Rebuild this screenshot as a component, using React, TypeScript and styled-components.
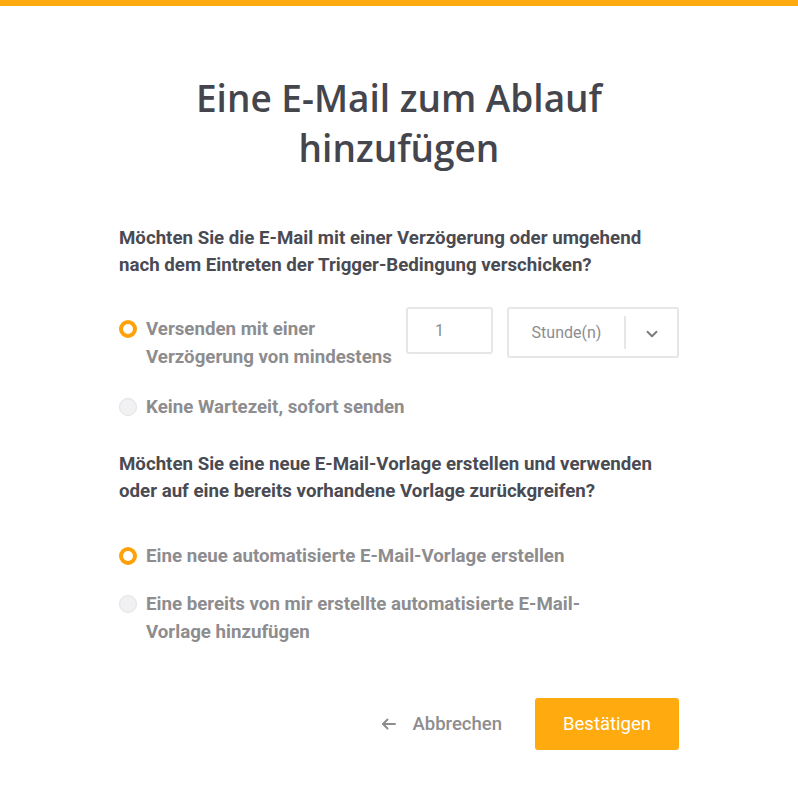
import React, { useState } from 'react';
import styled, { createGlobalStyle } from 'styled-components';

const GlobalStyle = createGlobalStyle`
    html, body {
        margin: 0;
        padding: 0;
        background: #ffffff;
    }
    * {
        box-sizing: border-box;
    }
`;

const TopBar = styled.div`
    height: 6px;
    background: #ffab10;
`;

const Whole = styled.section`
    width: 560px;
    margin: 0 auto;
    padding-top: 67px;
    font-family: Roboto, "Liberation Sans", sans-serif;
`;

const Title = styled.h1`
    margin: 0 0 52px;
    text-align: center;
    font-family: "Open Sans", "Liberation Sans", sans-serif;
    font-weight: 600;
    font-size: 37px;
    line-height: 50px;
    color: #45454d;
    padding: 0 60px;
`;

const Question = styled.p`
    margin: 0;
    font-size: 18.7px;
    font-weight: 700;
    line-height: 27px;
    color: #4a4a52;
`;

const Options = styled.div<{ $top: number; $gap: number }>`
    display: flex;
    flex-direction: column;
    gap: ${(p) => p.$gap}px;
    margin-top: ${(p) => p.$top}px;
`;

const OptionRow = styled.div`
    display: flex;
    align-items: flex-start;
    gap: 12px;
`;

const Label = styled.label<{ $width?: number }>`
    display: flex;
    align-items: flex-start;
    gap: 9px;
    width: ${(p) => (p.$width ? `${p.$width}px` : 'auto')};
    font-size: 18.7px;
    font-weight: 700;
    line-height: 28px;
    color: #8d8d8f;
    cursor: pointer;
`;

const Radio = styled.span<{ $checked: boolean }>`
    flex: none;
    width: 18px;
    height: 18px;
    margin-top: 5px;
    border-radius: 50%;
    background: ${(p) => (p.$checked ? '#ffffff' : '#f1f1f3')};
    border: ${(p) => (p.$checked ? '4.5px solid #ffa20a' : '1px solid #e2e2e4')};
`;

const NumberBox = styled.input`
    width: 87px;
    height: 47px;
    margin-top: -8px;
    border: 2px solid #e6e6e8;
    border-radius: 3px;
    padding: 0 0 0 27px;
    font-family: Roboto, "Liberation Sans", sans-serif;
    font-size: 16px;
    color: #8d8d8f;
    outline: none;
`;

const Select = styled.div`
    display: flex;
    align-items: center;
    width: 172px;
    height: 51px;
    margin-top: -8px;
    margin-left: 2px;
    border: 2px solid #e6e6e8;
    border-radius: 3px;
`;

const SelectValue = styled.span`
    flex: 1;
    text-align: center;
    font-size: 16px;
    color: #8d8d8f;
`;

const Divider = styled.span`
    width: 2px;
    height: 33px;
    background: #e6e6e8;
`;

const Chevron = styled.span`
    width: 51px;
    display: flex;
    justify-content: center;
    align-items: center;
    padding-top: 2px;
    color: #7d7d80;
`;

const Section = styled.div<{ $top: number }>`
    margin-top: ${(p) => p.$top}px;
`;

const Footer = styled.div`
    display: flex;
    justify-content: flex-end;
    align-items: center;
    gap: 33px;
    margin-top: 52px;
`;

const CancelBtn = styled.button`
    display: flex;
    align-items: center;
    gap: 15px;
    border: none;
    background: none;
    padding: 0;
    font-family: Roboto, "Liberation Sans", sans-serif;
    font-size: 18.5px;
    font-weight: 500;
    color: #8d8d8f;
    cursor: pointer;
`;

const ConfirmBtn = styled.button`
    width: 144px;
    height: 52px;
    border: none;
    border-radius: 3px;
    background: #ffab10;
    font-family: Roboto, "Liberation Sans", sans-serif;
    font-size: 18.5px;
    color: #ffffff;
    cursor: pointer;
`;

function App() {
    const [delay, setDelay] = useState(0);
    const [template, setTemplate] = useState(0);

    return (
        <>
            <GlobalStyle />
            <TopBar />
            <Whole>
                <Title>Eine E-Mail zum Ablauf hinzufügen</Title>

                <Question>
                    Möchten Sie die E-Mail mit einer Verzögerung oder umgehend nach dem Eintreten der Trigger-Bedingung verschicken?
                </Question>
                <Options $top={36} $gap={22}>
                    <OptionRow>
                        <Label $width={275} onClick={() => setDelay(0)}>
                            <Radio $checked={delay === 0} />
                            <span>Versenden mit einer Verzögerung von mindestens</span>
                        </Label>
                        <NumberBox defaultValue="1" />
                        <Select>
                            <SelectValue>Stunde(n)</SelectValue>
                            <Divider />
                            <Chevron>
                                <svg width="18" height="18" viewBox="0 0 24 24" fill="none" stroke="currentColor" strokeWidth="2.6" strokeLinecap="round" strokeLinejoin="round">
                                    <polyline points="6 9 12 15 18 9" />
                                </svg>
                            </Chevron>
                        </Select>
                    </OptionRow>
                    <Label onClick={() => setDelay(1)}>
                        <Radio $checked={delay === 1} />
                        <span>Keine Wartezeit, sofort senden</span>
                    </Label>
                </Options>

                <Section $top={30}>
                    <Question>
                        Möchten Sie eine neue E-Mail-Vorlage erstellen und verwenden oder auf eine bereits vorhandene Vorlage zurückgreifen?
                    </Question>
                </Section>
                <Options $top={37} $gap={20}>
                    <Label onClick={() => setTemplate(0)}>
                        <Radio $checked={template === 0} />
                        <span>Eine neue automatisierte E-Mail-Vorlage erstellen</span>
                    </Label>
                    <Label $width={480} onClick={() => setTemplate(1)}>
                        <Radio $checked={template === 1} />
                        <span>Eine bereits von mir erstellte automatisierte E-Mail-Vorlage hinzufügen</span>
                    </Label>
                </Options>

                <Footer>
                    <CancelBtn>
                        <svg width="18" height="18" viewBox="0 0 24 24" fill="none" stroke="currentColor" strokeWidth="2.6" strokeLinecap="round" strokeLinejoin="round">
                            <line x1="20" y1="12" x2="4" y2="12" />
                            <polyline points="10 6 4 12 10 18" />
                        </svg>
                        Abbrechen
                    </CancelBtn>
                    <ConfirmBtn>Bestätigen</ConfirmBtn>
                </Footer>
            </Whole>
        </>
    );
}
export default App;
